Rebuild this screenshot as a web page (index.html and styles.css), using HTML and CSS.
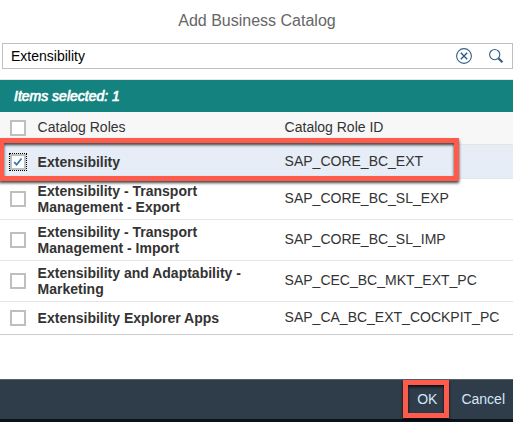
FILE: index.html
```html
<!DOCTYPE html>
<html lang="en">
<head>
<meta charset="utf-8">
<title>Add Business Catalog</title>
<link rel="stylesheet" href="styles.css">
</head>
<body>
<main class="dialog">
  <h1 class="title">Add Business Catalog</h1>
  <div class="search">
    <span class="query">Extensibility</span>
    <svg class="clear" width="18" height="18" viewBox="0 0 18 18"><circle cx="9" cy="9" r="7.4"/><path d="M5.8 5.8l6.4 6.4M12.2 5.8l-6.4 6.4"/></svg>
    <svg class="find" width="16" height="16" viewBox="0 0 16 16"><circle cx="6.7" cy="6.6" r="5.1"/><path class="handle" d="M10.4 10.3l4 4"/></svg>
  </div>
  <div class="info">Items selected: 1</div>
  <div class="table">
    <div class="row head"><span class="box"></span><span class="label">Catalog Roles</span><span class="label">Catalog Role ID</span></div>
    <div class="row selected"><span class="box checked"><svg width="12" height="12" viewBox="0 0 12 12"><path d="M2.2 6.2l2.4 2.5 4.9-6.2"/></svg></span><b>Extensibility</b><span class="id">SAP_CORE_BC_EXT</span></div>
    <div class="row tall"><span class="box"></span><b>Extensibility - Transport<br>Management - Export</b><span class="id">SAP_CORE_BC_SL_EXP</span></div>
    <div class="row tall"><span class="box"></span><b>Extensibility - Transport<br>Management - Import</b><span class="id">SAP_CORE_BC_SL_IMP</span></div>
    <div class="row tall"><span class="box"></span><b>Extensibility and Adaptability -<br>Marketing</b><span class="id">SAP_CEC_BC_MKT_EXT_PC</span></div>
    <div class="row last"><span class="box"></span><b>Extensibility Explorer Apps</b><span class="id">SAP_CA_BC_EXT_COCKPIT_PC</span></div>
  </div>
  <footer class="footer"><span class="ok">OK</span><span class="cancel">Cancel</span></footer>
  <div class="mark mark-row"></div>
  <div class="mark mark-ok"></div>
</main>
</body>
</html>
```
FILE: styles.css
```css
* { box-sizing: border-box; }
body {
  margin: 0;
  font: 14px/16px "Liberation Sans", Arial, sans-serif;
  color: #333;
  background: #fff;
}
.dialog {
  position: relative;
  display: flex;
  flex-direction: column;
  width: 513px;
  height: 422px;
  overflow: hidden;
}
.title {
  height: 43px;
  margin: 0;
  padding-left: 1px;
  font-size: 16px;
  line-height: 41px;
  font-weight: normal;
  text-align: center;
  color: #666;
}
.search {
  display: flex;
  align-items: center;
  height: 26px;
  margin: 0 0 10px 2px;
  padding: 0 8px;
  border: 1px solid #bfbfbf;
  color: #000;
}
.query { flex: 1; }
.search svg { fill: none; stroke: #346187; stroke-width: 1.1; }
.search .clear { margin-right: 15px; }
.search .clear path { stroke-width: 1.5; }
.search .handle { stroke-width: 2.3; }
.info {
  height: 33px;
  padding-left: 14px;
  border-top: 1px solid #e5e5e5;
  background: #14827f;
  color: #fff;
  font-style: italic;
  -webkit-text-stroke: 0.7px #fff;
  line-height: 32px;
}
.row {
  display: grid;
  grid-template-columns: 27.6px 247px 1fr;
  align-items: center;
  height: 34px;
  padding-left: 10px;
  border-bottom: 1px solid #e5e5e5;
  white-space: nowrap;
}
.head { height: 33px; background: #f7f7f7; }
.label { padding-bottom: 2px; }
.id { padding-bottom: 2px; }
.selected { background: #e6edf6; }
.tall { height: 41px; }
.last { height: 33px; border-color: #ccc; }
.box {
  display: block;
  width: 16px;
  height: 16px;
  border: 2px solid #bfbfbf;
  background: #fff;
}
.checked { outline: 1px dotted #000; }
.checked svg { display: block; fill: none; stroke: #3578af; stroke-width: 1.8; }
.footer {
  display: flex;
  justify-content: flex-end;
  gap: 24px;
  height: 43px;
  margin-top: auto;
  padding-right: 8px;
  border-top: 1px solid #53616f;
  border-bottom: 3px solid #0b121a;
  background: #2f3c49;
  color: #d5e6f7;
  line-height: 39px;
}
.mark {
  position: absolute;
  border: 5px solid #ff5b4d;
  filter: drop-shadow(0 2px 1.5px rgba(0, 0, 0, .75));
}
.mark-row { left: -1px; top: 138px; width: 460px; height: 43px; }
.mark-ok { left: 403px; top: 380px; width: 46px; height: 38px; }
```
